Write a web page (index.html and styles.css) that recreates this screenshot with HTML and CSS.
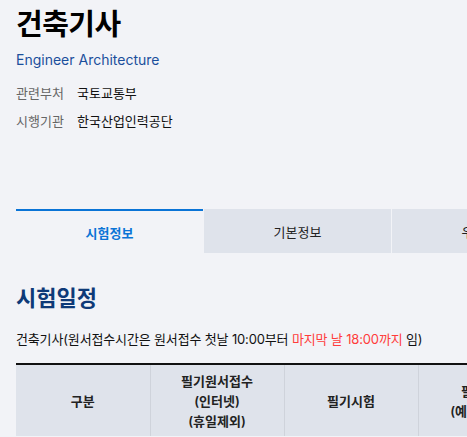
FILE: index.html
```html
<!DOCTYPE html>
<html lang="ko">
<head>
<meta charset="utf-8">
<link rel="stylesheet" href="styles.css">
</head>
<body>
<div class="page">
  <header class="head">
    <h1 class="title">건축기사</h1>
    <p class="eng">Engineer Architecture</p>
    <dl class="info">
      <div class="row"><dt>관련부처</dt><dd>국토교통부</dd></div>
      <div class="row"><dt>시행기관</dt><dd>한국산업인력공단</dd></div>
    </dl>
  </header>
  <nav class="tabs">
    <div class="tab active">시험정보</div>
    <div class="tab">기본정보</div>
    <div class="tab">우대현황</div>
  </nav>
  <section class="sched">
    <h2 class="h2">시험일정</h2>
    <p class="note">건축기사(원서접수시간은 원서접수 첫날 10:00부터 <span class="red">마지막 날 18:00까지</span> 임)</p>
    <table class="tbl">
      <thead>
        <tr>
          <th>구분</th>
          <th>필기원서접수<br>(인터넷)<br>(휴일제외)</th>
          <th>필기시험</th>
          <th>필기합격<br>(예정자)발표</th>
        </tr>
      </thead>
    </table>
  </section>
</div>
</body>
</html>
```
FILE: styles.css
```css
* { box-sizing: border-box; }
html, body { margin: 0; padding: 0; }
body {
  background: #f2f3f7;
  font-family: Inter, "Noto Sans CJK KR", sans-serif;
  color: #111;
  width: 467px;
  overflow: hidden;
}
.page { padding: 0 0 0 16px; width: 760px; }
.head { padding-top: 5px; }
.title { margin: 0; font-size: 29px; font-weight: 700; line-height: 40px; letter-spacing: -0.5px; color: #000; }
.eng { margin: 5px 0 0; font-size: 14px; line-height: 20px; color: #1b4f9c; }
.info { margin: 13px 0 0; }
.row { display: flex; font-size: 13px; line-height: 20px; margin-bottom: 8px; }
.row dt { color: #666; width: 61px; }
.row dd { margin: 0; color: #111; }
.tabs { display: flex; gap: 1px; margin-top: 78px; }
.tab {
  width: 187px; height: 44px; display: flex; align-items: center; justify-content: center;
  background: #dfe3eb; font-size: 13px; color: #222;
}
.tab.active { background: transparent; border-top: 2px solid #0a74d6; color: #0a74d6; font-weight: 600; width: 187px; }
.sched { padding-top: 30px; }
.h2 { margin: 0; font-size: 22px; line-height: 30px; font-weight: 700; color: #0e3a78; }
.note { margin: 16px 0 0; font-size: 13px; line-height: 20px; color: #111; letter-spacing: -0.15px; }
.red { color: #ff3b3b; }
.tbl { margin-top: 14px; border-collapse: collapse; border-top: 2px solid #111; }
.tbl th {
  width: 134px; height: 72px; background: #dfe3eb; border-right: 1px solid #cfd3db;
  font-size: 13px; line-height: 20px; font-weight: 600; color: #222; padding: 0;
}
```
